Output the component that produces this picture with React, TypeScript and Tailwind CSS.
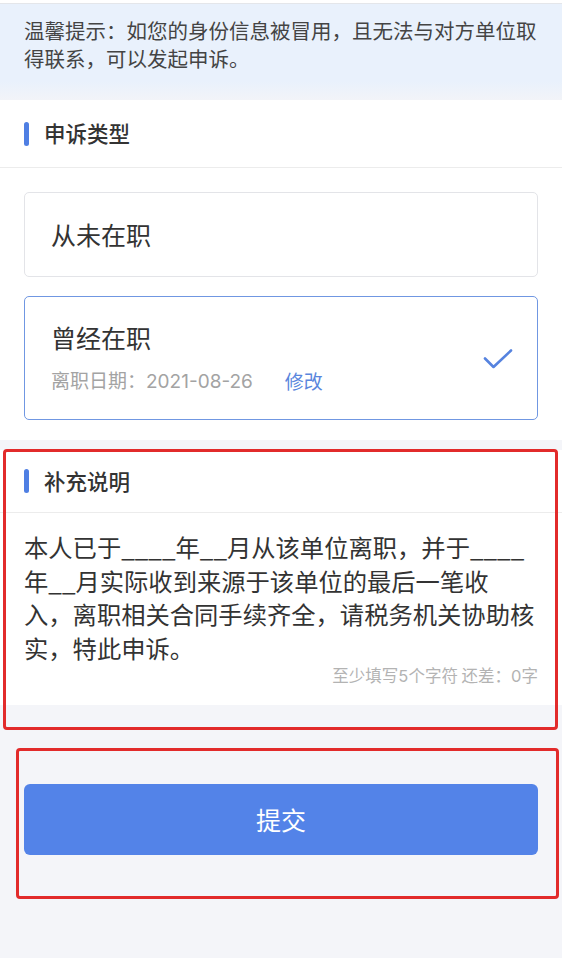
import React from "react";

const font = { fontFamily: '"Noto Sans CJK SC", "Noto Sans", sans-serif' };
const latin = { fontFamily: 'Inter, "Noto Sans CJK SC", sans-serif' };

function SectionHeader({ title }: { title: string }) {
  return (
    <div className="flex items-center gap-[15px] pl-[24px]">
      <div className="w-[5px] h-[24px] rounded-full bg-[#4f7fe3]" />
      <span className="text-[21.5px] font-medium text-[#333]">{title}</span>
    </div>
  );
}

export default function App() {
  return (
    <div className="relative w-[562px] h-[958px] bg-[#f4f5f9] overflow-hidden" style={font}>
      {/* top strip */}
      <div className="h-[4px] bg-white border-b border-[#e4e6ea]" />
      {/* notice */}
      <div className="h-[96px] px-[24px] pt-[12px] bg-[linear-gradient(180deg,#e9f1fc_0%,#e9f1fc_80%,#f2f4f8_100%)]">
        <p className="text-[20.5px] leading-[28px] text-[#444] whitespace-nowrap">
          温馨提示：如您的身份信息被冒用，且无法与对方单位取
          <br />
          得联系，可以发起申诉。
        </p>
      </div>

      {/* appeal type */}
      <div className="bg-white h-[340px]">
        <div className="h-[68px] flex items-center border-b border-[#ececec]">
          <SectionHeader title="申诉类型" />
        </div>
        <div className="px-[24px] pt-[24px] flex flex-col gap-[19px]">
          <div className="h-[85px] rounded-[5px] border border-[#e3e4e8] flex items-center pl-[26px]">
            <span className="text-[25px] text-[#333]">从未在职</span>
          </div>
          <div className="h-[124px] rounded-[5px] border-[1.5px] border-[#7097e2] flex items-center justify-between pl-[26px] pr-[24px]">
            <div className="flex flex-col">
              <span className="text-[25px] leading-[32px] text-[#333]">曾经在职</span>
              <div className="mt-[14px] flex items-center text-[19px] leading-[26px]">
                <span className="text-[#a3a3a3]">
                  离职日期：<span style={latin}>2021-08-26</span>
                </span>
                <span className="ml-[32px] text-[#5a86dd]">修改</span>
              </div>
            </div>
            <svg width="30" height="22" viewBox="0 0 30 22" className="mt-[2px]">
              <path d="M2 10.5 L10.5 19 L28 2.5" fill="none" stroke="#5683df" strokeWidth="2.6" strokeLinecap="round" strokeLinejoin="round" />
            </svg>
          </div>
        </div>
      </div>

      {/* supplement */}
      <div className="mt-[10px] bg-white h-[255px]">
        <div className="h-[63px] flex items-center border-b border-[#ececec]">
          <SectionHeader title="补充说明" />
        </div>
        <div className="px-[24px] pt-[17px]">
          <p className="text-[24.3px] leading-[33.5px] text-[#333] whitespace-nowrap">
            本人已于____年__月从该单位离职，并于____
            <br />
            年__月实际收到来源于该单位的最后一笔收
            <br />
            入，离职相关合同手续齐全，请税务机关协助核
            <br />
            实，特此申诉。
          </p>
          <div className="text-right text-[16.5px] leading-[22px] text-[#b3b3b3]">
            至少填写<span style={latin}>5</span>个字符 还差：<span style={latin}>0</span>字
          </div>
        </div>
      </div>

      {/* submit */}
      <div className="px-[24px] pt-[79px]">
        <button className="w-full h-[71px] rounded-[6px] bg-[#5383e8] text-white text-[25px]">提交</button>
      </div>

      {/* annotation overlays */}
      <div className="absolute left-[3px] top-[449px] w-[555px] h-[281px] border-[3px] border-[#e22b2b] rounded-[4px] pointer-events-none" />
      <div className="absolute left-[16px] top-[748px] w-[543px] h-[151px] border-[3px] border-[#e22b2b] rounded-[4px] pointer-events-none" />
    </div>
  );
}
